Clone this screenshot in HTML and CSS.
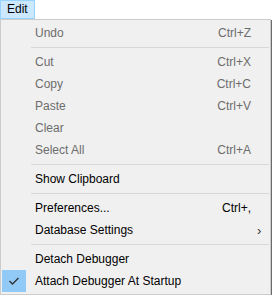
FILE: index.html
```html
<!DOCTYPE html>
<html lang="en">
<head>
    <meta charset="UTF-8">
    <title>Edit menu</title>
    <link rel="stylesheet" href="styles.css">
</head>
<body>
    <div class="menubar">
        <span class="menubar-item ativo">Edit</span>
    </div>
    <div class="menu">
        <div class="item desativado"><span class="gutter"></span><span class="rotulo">Undo</span><span class="atalho">Ctrl+Z</span><span class="seta"></span></div>
        <div class="separador"></div>
        <div class="item desativado"><span class="gutter"></span><span class="rotulo">Cut</span><span class="atalho">Ctrl+X</span><span class="seta"></span></div>
        <div class="item desativado"><span class="gutter"></span><span class="rotulo">Copy</span><span class="atalho">Ctrl+C</span><span class="seta"></span></div>
        <div class="item desativado"><span class="gutter"></span><span class="rotulo">Paste</span><span class="atalho">Ctrl+V</span><span class="seta"></span></div>
        <div class="item desativado"><span class="gutter"></span><span class="rotulo">Clear</span><span class="atalho"></span><span class="seta"></span></div>
        <div class="item desativado"><span class="gutter"></span><span class="rotulo">Select All</span><span class="atalho">Ctrl+A</span><span class="seta"></span></div>
        <div class="separador"></div>
        <div class="item"><span class="gutter"></span><span class="rotulo">Show Clipboard</span><span class="atalho"></span><span class="seta"></span></div>
        <div class="separador"></div>
        <div class="item"><span class="gutter"></span><span class="rotulo">Preferences...</span><span class="atalho">Ctrl+,</span><span class="seta"></span></div>
        <div class="item"><span class="gutter"></span><span class="rotulo">Database Settings</span><span class="atalho"></span><span class="seta">&#8250;</span></div>
        <div class="separador"></div>
        <div class="item"><span class="gutter"></span><span class="rotulo">Detach Debugger</span><span class="atalho"></span><span class="seta"></span></div>
        <div class="item"><span class="gutter"><span class="check"><svg width="12" height="10" viewBox="0 0 12 10"><path d="M1.5 5 L4.5 8 L10.5 2" fill="none" stroke="#333" stroke-width="1.4"/></svg></span></span><span class="rotulo">Attach Debugger At Startup</span><span class="atalho"></span><span class="seta"></span></div>
    </div>
</body>
</html>
```

FILE: styles.css
```css
body {
    margin: 0;
    background: #fff;
    font-family: 'Liberation Sans', Arial, sans-serif;
    font-size: 12px;
    color: #000;
}

.menubar {
    display: flex;
    height: 19px;
}

.menubar-item {
    box-sizing: border-box;
    width: 35px;
    height: 19px;
    line-height: 17px;
    padding-left: 6px;
    border: 1px solid transparent;
}

.menubar-item.ativo {
    background: #cce8ff;
    border-color: #99d1ff;
}

.menu {
    box-sizing: border-box;
    width: 271px;
    height: 276px;
    background: #f0f0f0;
    border: 1px solid #cccccc;
    box-shadow: 1px 1px 0 #6a6a6a;
    padding: 2px 0 1px 0;
}

.item {
    display: flex;
    align-items: center;
    height: 22px;
}

.desativado {
    color: #6d6d6d;
}

.gutter {
    display: flex;
    align-items: center;
    width: 34px;
    height: 22px;
    flex: none;
}

.check {
    display: flex;
    align-items: center;
    justify-content: center;
    width: 24px;
    height: 22px;
    margin-left: 1px;
    background: #91c9f7;
}

.rotulo {
    flex: 1;
}

.seta {
    width: 19px;
    flex: none;
    box-sizing: border-box;
    padding-left: 6px;
    font-size: 13px;
    color: #333;
}

.separador {
    height: 1px;
    margin: 3px 1px 3px 30px;
    background: #d7d7d7;
}
```
